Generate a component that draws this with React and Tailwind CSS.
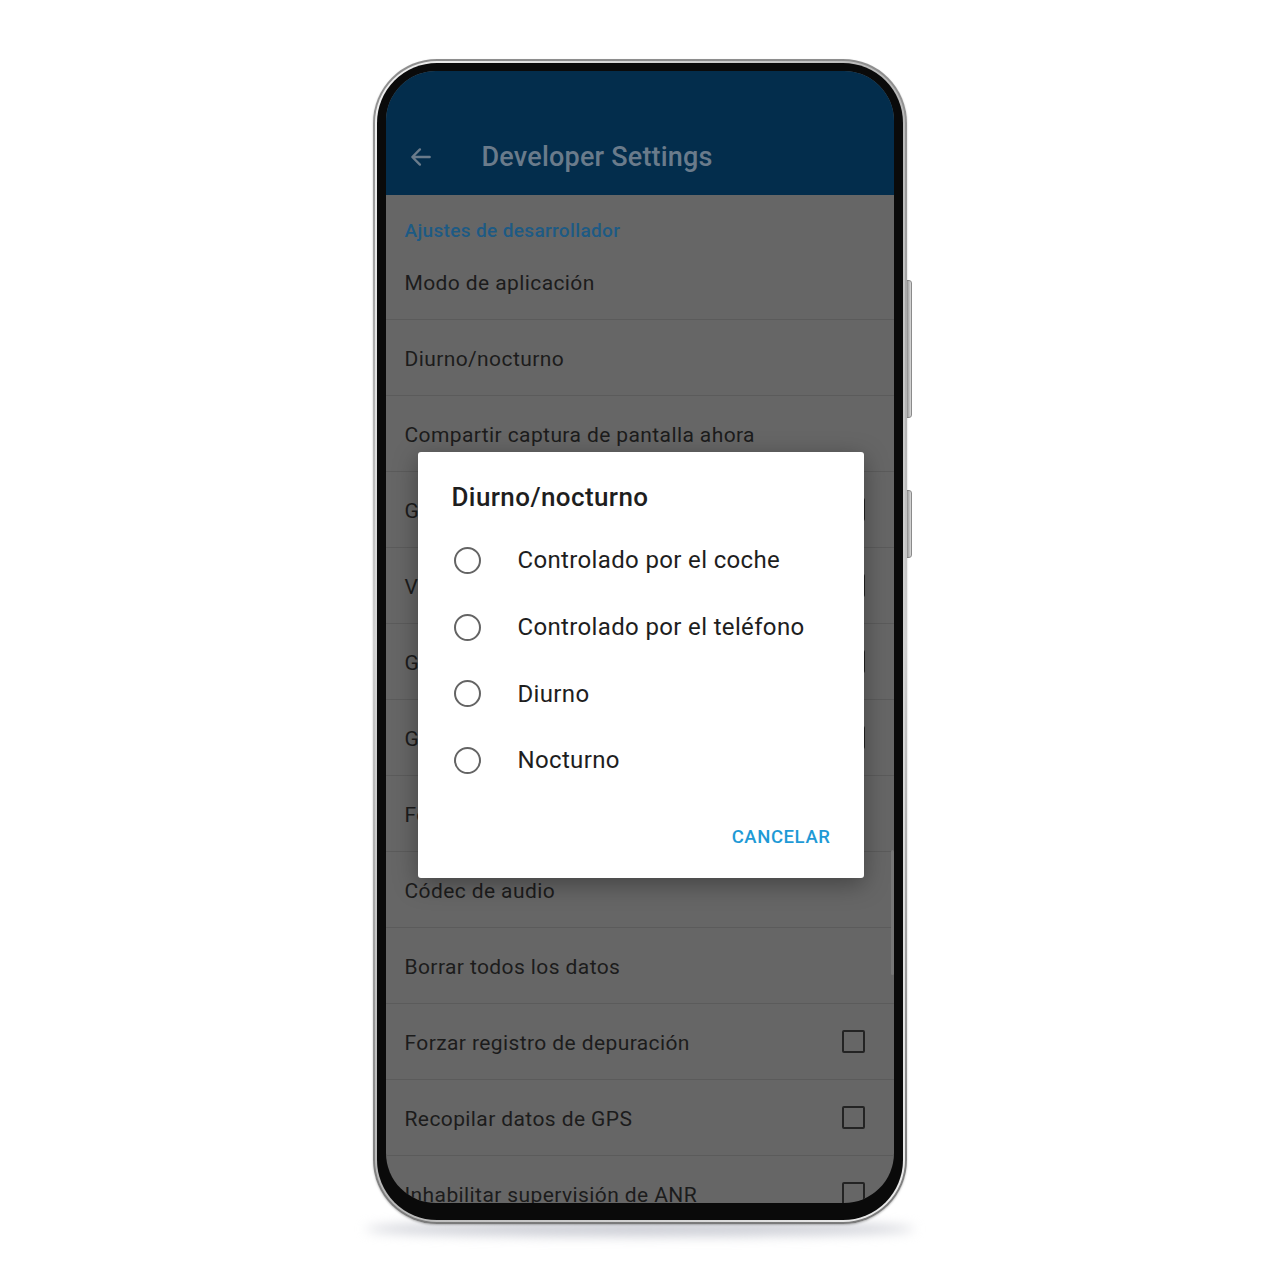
import React from "react";

const rows = [
  { label: "Modo de aplicación" },
  { label: "Diurno/nocturno" },
  { label: "Compartir captura de pantalla ahora" },
  { label: "Guardar registros de depuración", check: true },
  { label: "Vídeo de depuración", check: true },
  { label: "GPS simulado", check: true },
  { label: "Grabar datos de sensores", check: true },
  { label: "Forzar modo de conducción" },
  { label: "Códec de audio" },
  { label: "Borrar todos los datos" },
  { label: "Forzar registro de depuración", check: true },
  { label: "Recopilar datos de GPS", check: true },
  { label: "Inhabilitar supervisión de ANR", check: true },
];

const options = [
  "Controlado por el coche",
  "Controlado por el teléfono",
  "Diurno",
  "Nocturno",
];

const BackArrow = () => (
  <svg width="26" height="26" viewBox="0 0 24 24" fill="none">
    <path
      d="M20 12H5M11 5l-7 7 7 7"
      stroke="#6a7b8b"
      strokeWidth="2.2"
      strokeLinecap="round"
      strokeLinejoin="round"
    />
  </svg>
);

const SettingRow = ({ label, check }) => (
  <div className="h-[76px] flex items-center justify-between pl-[19px] pr-[29px] border-b border-[#5b5b5b]">
    <span className="text-[21px] leading-[28px] text-[#1c1c1c] tracking-[0.4px] pt-[3px] whitespace-nowrap">
      {label}
    </span>
    {check && (
      <div className="w-[23px] h-[23px] border-2 border-[#232323] rounded-[2px] shrink-0" />
    )}
  </div>
);

const App = () => {
  return (
    <div
      className="w-[1280px] h-[1280px] bg-white flex justify-center pt-[59px]"
      style={{ fontFamily: "Roboto, 'Noto Sans', sans-serif" }}
    >
      <div className="relative w-[534px] h-[1165px] ml-[-1px]">
        {/* shadow under the phone */}
        <div className="absolute left-[-8px] right-[-8px] bottom-[-12px] h-[14px] rounded-[50%] bg-[#c9cbd3] blur-[6px]" />

        {/* side buttons */}
        <div className="absolute right-[-5px] top-[221px] w-[6px] h-[138px] rounded-r-[3px] bg-gradient-to-r from-[#9a9a9a] to-[#d8d8d8] border border-[#8a8a8a]" />
        <div className="absolute right-[-5px] top-[431px] w-[6px] h-[68px] rounded-r-[3px] bg-gradient-to-r from-[#9a9a9a] to-[#d8d8d8] border border-[#8a8a8a]" />

        {/* frame */}
        <div className="relative h-full rounded-[64px] p-[2px] bg-gradient-to-b from-[#8d8d8d] via-[#cfcfcf] to-[#7a7a7a] shadow-[0_1px_2px_rgba(0,0,0,0.25)]">
          <div className="h-full rounded-[62px] p-[2px] bg-gradient-to-br from-[#f2f2f2] via-[#b8b8b8] to-[#ededed]">
            <div className="h-full rounded-[60px] pt-[8px] px-[9px] pb-[17px] bg-[#0a0a0a]">
              {/* screen */}
              <div className="relative h-full rounded-[50px] overflow-hidden bg-[#666666]">
                {/* app bar */}
                <div className="h-[124px] bg-[#032d4c] pt-[48px]">
                  <div className="h-[76px] flex items-center pl-[22px]">
                    <BackArrow />
                    <span className="ml-[48px] text-[27px] font-medium text-[#6a7b8b] tracking-[0.2px]">
                      Developer Settings
                    </span>
                  </div>
                </div>

                {/* list */}
                <div className="relative">
                  <div className="h-[50px] pt-[24px] pl-[19px]">
                    <span className="block leading-[24px] text-[19px] font-medium text-[#1d5a84] tracking-[0.35px]">
                      Ajustes de desarrollador
                    </span>
                  </div>
                  <div className="mt-[-1px]">
                    {rows.map((r) => (
                      <SettingRow key={r.label} {...r} />
                    ))}
                  </div>
                  {/* scrollbar */}
                  <div className="absolute right-[0px] top-[655px] w-[3px] h-[125px] bg-[#777777] rounded-full" />
                </div>

                {/* dialog */}
                <div className="absolute left-[32px] top-[381px] w-[446px] h-[426px] bg-white rounded-[3px] shadow-[0_6px_24px_rgba(0,0,0,0.35)] flex flex-col">
                  <div className="pt-[29px] pl-[34px] text-[26px] font-medium text-[#1e1e1e] leading-[32px] tracking-[0.4px]">
                    Diurno/nocturno
                  </div>
                  <div className="mt-[14px] flex flex-col">
                    {options.map((o) => (
                      <div key={o} className="h-[66.7px] flex items-center pl-[36px]">
                        <div className="w-[27px] h-[27px] rounded-full border-[2.5px] border-[#646464] shrink-0" />
                        <span className="ml-[37px] text-[24px] text-[#1e1e1e] tracking-[0.35px] whitespace-nowrap">
                          {o}
                        </span>
                      </div>
                    ))}
                  </div>
                  <div className="flex-1 flex items-center justify-end pr-[33px] pt-[4px]">
                    <span className="text-[18.5px] font-medium text-[#1e9ad6] tracking-[0.6px]">
                      CANCELAR
                    </span>
                  </div>
                </div>
              </div>
            </div>
          </div>
        </div>
      </div>
    </div>
  );
};

export default App;
